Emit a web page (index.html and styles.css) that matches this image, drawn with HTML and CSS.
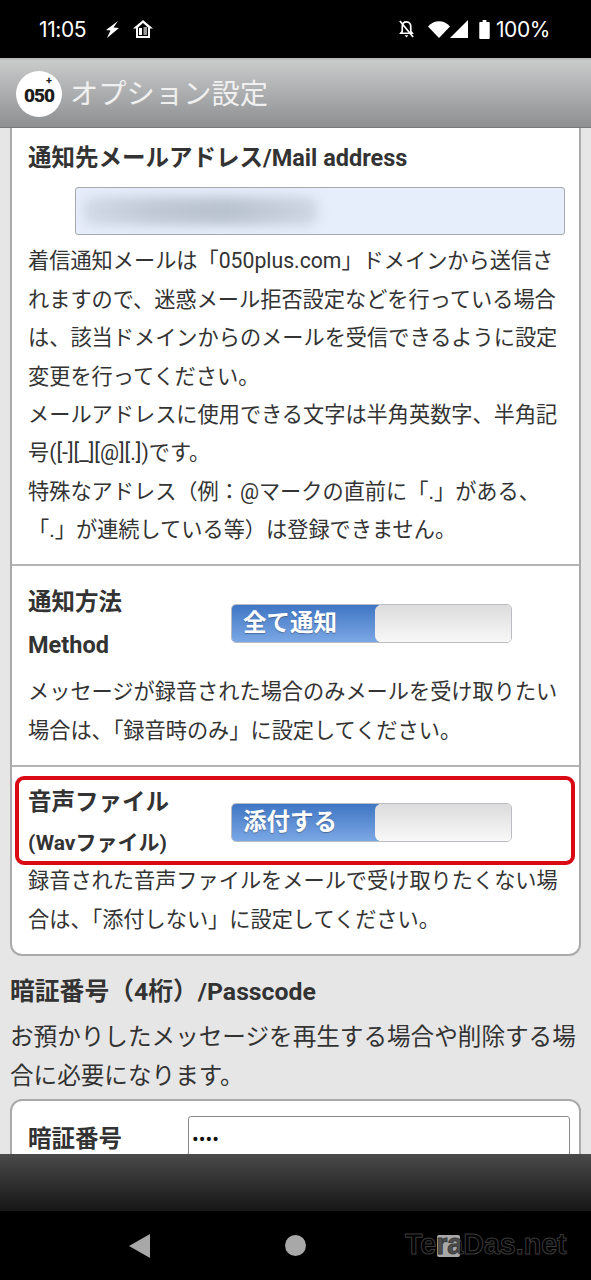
FILE: index.html
```html
<!DOCTYPE html>
<html lang="ja">
<head>
    <meta charset="UTF-8">
    <meta name="viewport" content="width=device-width, initial-scale=1.0">
    <title>オプション設定</title>
    <link rel="stylesheet" href="styles.css">
</head>
<body>
    <div class="phone">
        <div class="status-bar">
            <div class="status-left">
                <span class="clock">11:05</span>
                <svg class="icon-bolt" viewBox="0 0 14 17"><path d="M13 0 1 9l4.500.5L2 17 14 7l-5.500-.5z" fill="#fff"/></svg>
                <svg class="icon-home" viewBox="0 0 20 18"><path d="M10 0 0 8.500h3V18h14V8.500h3zM5 16V7.500L10 3l5 4.500V16z" fill="#fff"/><rect x="6" y="8" width="3" height="7" fill="#fff"/><rect x="10.500" y="7" width="3.500" height="8" fill="#999"/></svg>
            </div>
            <div class="status-right">
                <svg class="icon-bell" viewBox="0 0 18 20"><path d="M9 2.500c-3 0-4.500 2.300-4.500 5v5L3 14.500h12L13.500 12.500v-5c0-2.700-1.500-5-4.500-5z" fill="none" stroke="#fff" stroke-width="1.800"/><path d="M7 16.500h4L9 19z" fill="#fff"/><path d="M2 1.500l14 17" stroke="#fff" stroke-width="1.800"/></svg>
                <svg class="icon-wifi" viewBox="0 0 22 17"><path d="M0 5.500c6-7 16-7 22 0L11 17z" fill="#fff"/></svg>
                <svg class="icon-signal" viewBox="0 0 18 18"><path d="M18 0v18H0z" fill="#fff"/></svg>
                <svg class="icon-battery" viewBox="0 0 11 20"><path d="M3.500 0h4v2H10a1 1 0 0 1 1 1v16a1 1 0 0 1-1 1H1a1 1 0 0 1-1-1V3a1 1 0 0 1 1-1h2.500z" fill="#fff"/></svg>
                <span class="battery-text">100%</span>
            </div>
        </div>

        <header class="app-header">
            <div class="logo"><span class="logo-num">050</span><span class="logo-plus">+</span></div>
            <h1>オプション設定</h1>
        </header>

        <main class="content">
            <div class="card card-top">
                <section class="section section-mail">
                    <h2>通知先メールアドレス/Mail address</h2>
                    <div class="mail-input"><div class="mail-blur"></div></div>
                    <p class="desc">着信通知メールは「050plus.com」ドメインから送信されますので、迷惑メール拒否設定などを行っている場合は、該当ドメインからのメールを受信できるように設定変更を行ってください。<br>メールアドレスに使用できる文字は半角英数字、半角記号([-][_][@][.])です。<br>特殊なアドレス（例：@マークの直前に「.」がある、「.」が連続している等）は登録できません。</p>
                </section>

                <section class="section section-method">
                    <div class="setting-row">
                        <div class="setting-label">
                            <div class="label-line">通知方法</div>
                            <div class="label-line label-en">Method</div>
                        </div>
                        <div class="toggle"><div class="toggle-on">全て通知</div><div class="toggle-off"></div></div>
                    </div>
                    <p class="desc">メッセージが録音された場合のみメールを受け取りたい場合は、「録音時のみ」に設定してください。</p>
                </section>

                <section class="section section-file">
                    <div class="highlight"></div>
                    <div class="setting-row">
                        <div class="setting-label">
                            <div class="label-line">音声ファイル</div>
                            <div class="label-line label-wav">(Wavファイル)</div>
                        </div>
                        <div class="toggle"><div class="toggle-on">添付する</div><div class="toggle-off"></div></div>
                    </div>
                    <p class="desc">録音された音声ファイルをメールで受け取りたくない場合は、「添付しない」に設定してください。</p>
                </section>
            </div>

            <h2 class="outer-title">暗証番号（4桁）/Passcode</h2>
            <p class="desc outer-desc">お預かりしたメッセージを再生する場合や削除する場合に必要になります。</p>

            <div class="card card-pass">
                <div class="pass-row">
                    <div class="pass-label">暗証番号</div>
                    <div class="pass-input">••••</div>
                </div>
            </div>
        </main>

        <div class="bottom-bar"></div>

        <nav class="nav-bar">
            <svg class="nav-back" viewBox="0 0 21 24"><path d="M21 0v24L0 12z" fill="#a8a8a8"/></svg>
            <div class="nav-home"></div>
            <div class="nav-recent"></div>
            <div class="watermark">TeraDas.net</div>
        </nav>
    </div>
</body>
</html>
```

FILE: styles.css
```css
* {
    box-sizing: border-box;
}

body {
    margin: 0;
    background-color: #000;
    font-family: Roboto, "Noto Sans CJK JP", sans-serif;
}

.phone {
    width: 591px;
    height: 1280px;
    display: flex;
    flex-direction: column;
    overflow: hidden;
}

/* status bar */
.status-bar {
    height: 58px;
    flex: none;
    background-color: #000;
    color: #fff;
    display: flex;
    justify-content: space-between;
    align-items: center;
    padding: 0 41px 0 39px;
}

.status-left,
.status-right {
    display: flex;
    align-items: center;
}

.clock,
.battery-text {
    font-size: 21px;
    font-family: Inter, Roboto, sans-serif;
    letter-spacing: -0.4px;
}

.icon-bolt {
    width: 14px;
    height: 17px;
    margin-left: 19px;
}

.icon-home {
    width: 20px;
    height: 18px;
    margin-left: 14px;
}

.icon-bell {
    width: 17px;
    height: 20px;
}

.icon-wifi {
    width: 22px;
    height: 17px;
    margin-left: 13px;
}

.icon-signal {
    width: 18px;
    height: 18px;
}

.icon-battery {
    width: 11px;
    height: 19px;
    margin-left: 11px;
}

.battery-text {
    margin-left: 6px;
}

/* app header */
.app-header {
    height: 70px;
    flex: none;
    display: flex;
    align-items: center;
    padding: 0 0 0 16px;
    background: linear-gradient(#cacbcb, #8d8f91);
    border-top: 2px solid #bbb;
    border-bottom: 1px solid #777;
}

.logo {
    position: relative;
    width: 46px;
    height: 46px;
    border-radius: 50%;
    background-color: #fff;
    display: flex;
    align-items: center;
    justify-content: center;
}

.logo-num {
    font-size: 19px;
    font-weight: 900;
    letter-spacing: -1px;
    color: #1c1c1c;
    margin-top: 4px;
}

.logo-plus {
    position: absolute;
    top: 3px;
    right: 10px;
    font-size: 11px;
    font-weight: 700;
    color: #222;
}

.app-header h1 {
    margin: 0 0 4px 8px;
    font-size: 28.3px;
    font-weight: 400;
    color: #f0f0f0;
}

/* scrolled content */
.content {
    flex: 1;
    min-height: 0;
    overflow: hidden;
    background-color: #e6e6e6;
    padding: 0 10px;
    color: #333;
}

.card {
    background-color: #fff;
    border: 2px solid #aaa;
    border-radius: 12px;
}

.card-top {
    border-top: none;
    border-radius: 0 0 12px 12px;
}

.section {
    position: relative;
    padding: 0 16px;
    border-bottom: 2px solid #b4b4b4;
}

.section:last-child {
    border-bottom: none;
}

h2 {
    margin: 0;
    font-size: 23.5px;
    line-height: 38.4px;
    font-weight: 700;
    color: #333;
}

.desc {
    margin: 0;
    font-size: 21.2px;
    line-height: 38.4px;
    color: #333;
}

.section-mail {
    padding-top: 11px;
    padding-bottom: 14px;
}

.mail-input {
    width: 490px;
    height: 48px;
    margin: 10px 0 7px 47px;
    padding-left: 7px;
    display: flex;
    align-items: center;
    background-color: #e6edfb;
    border: 1.5px solid #a6a9ad;
    border-radius: 3px;
}

.mail-blur {
    width: 235px;
    height: 28px;
    background: linear-gradient(90deg, #d2dae8, #c0c8d6 30%, #b8c1ce 60%, #ced6e4);
    border-radius: 12px;
    filter: blur(6px);
}

.section-method {
    padding-top: 17px;
    padding-bottom: 15px;
}

.section-file {
    padding-top: 16px;
    padding-bottom: 15px;
}

.setting-row {
    display: flex;
    align-items: flex-start;
}

.setting-label {
    width: 203px;
    flex: none;
}

.label-line {
    font-size: 23.5px;
    line-height: 38.4px;
    font-weight: 700;
}

.label-en {
    margin-top: 5px;
}

.section-method .setting-row {
    margin-bottom: 9px;
}

.section-method .toggle {
    margin-top: 21px;
}

.section-file .toggle {
    margin-top: 20px;
}

.label-wav {
    margin-top: 2px;
    font-size: 21px;
}

.toggle {
    width: 281px;
    height: 39px;
    display: flex;
    border: 1px solid #b9bcc0;
    border-radius: 5px;
    overflow: hidden;
}

.toggle-on {
    width: 147px;
    padding-left: 11px;
    font-size: 23.5px;
    font-weight: 700;
    line-height: 37px;
    color: #fff;
    text-shadow: 0 1px 1px rgba(0, 0, 0, 0.3);
    background: linear-gradient(#3f76c4, #7ba7e4);
}

.toggle-off {
    flex: 1;
    margin-left: -4px;
    border-radius: 6px 0 0 6px;
    background: linear-gradient(#dcdcdc, #f8f8f8);
}

/* red annotation frame, drawn over the row */
.highlight {
    position: absolute;
    top: 9px;
    left: 3px;
    width: 560px;
    height: 89px;
    border: 4px solid #d90a14;
    border-radius: 9px;
}

.outer-title {
    margin-top: 17px;
    font-size: 24.8px;
}

.outer-desc {
    margin-top: 7px;
    font-size: 23.6px;
}

.card-pass {
    margin-top: 4px;
    height: 120px;
    padding: 15px 9px 0 16px;
}

.pass-row {
    display: flex;
}

.pass-label {
    width: 160px;
    flex: none;
    font-size: 23.5px;
    line-height: 46px;
    font-weight: 700;
}

.pass-input {
    flex: 1;
    height: 60px;
    padding-left: 3px;
    font-size: 20px;
    line-height: 44px;
    color: #111;
    border: 1.5px solid #8a8a8a;
    border-radius: 3px;
    background-color: #fff;
}

/* bottom */
.bottom-bar {
    height: 57px;
    flex: none;
    background: linear-gradient(#4a4a4a, #161616);
}

.nav-bar {
    position: relative;
    height: 69px;
    flex: none;
    background-color: #000;
}

.nav-back {
    position: absolute;
    left: 129px;
    top: 23px;
    width: 21px;
    height: 24px;
}

.nav-home {
    position: absolute;
    left: 285px;
    top: 24px;
    width: 21px;
    height: 21px;
    border-radius: 50%;
    background-color: #a8a8a8;
}

.nav-recent {
    position: absolute;
    left: 437px;
    top: 24px;
    width: 23px;
    height: 22px;
    border-radius: 2px;
    background-color: #a8a8a8;
}

.watermark {
    position: absolute;
    left: 405px;
    top: 17px;
    font-family: "Liberation Sans", sans-serif;
    font-size: 28.6px;
    font-weight: 700;
    letter-spacing: 0;
    color: rgba(0, 0, 0, 0.55);
    -webkit-text-stroke: 1px #3a3a3a;
}
```
